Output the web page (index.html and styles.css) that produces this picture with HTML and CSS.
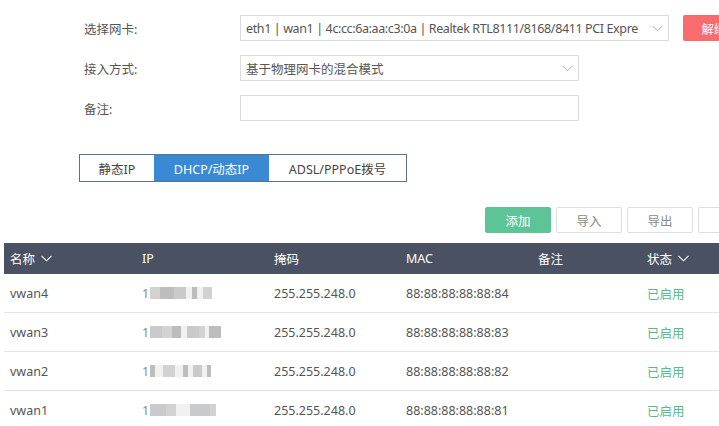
FILE: index.html
```html
<!DOCTYPE html>
<html lang="zh-CN">
<head>
<meta charset="utf-8">
<title>WAN</title>
<link rel="stylesheet" href="styles.css">
</head>
<body>
<div class="page">
  <div class="form">
    <div class="row">
      <div class="label">选择网卡:</div>
      <div class="select wide">
        <span class="val tight">eth1 | wan1 | 4c:cc:6a:aa:c3:0a | Realtek RTL8111/8168/8411 PCI Expre</span>
        <svg class="chev" width="11" height="7" viewBox="0 0 11 7"><path d="M0.5 0.8 L5.5 5.8 L10.5 0.8" fill="none" stroke="#a9adb3" stroke-width="1"/></svg>
      </div>
      <div class="btn-red">解绑</div>
    </div>
    <div class="row">
      <div class="label">接入方式:</div>
      <div class="select mid">
        <span class="val">基于物理网卡的混合模式</span>
        <svg class="chev" width="11" height="7" viewBox="0 0 11 7"><path d="M0.5 0.8 L5.5 5.8 L10.5 0.8" fill="none" stroke="#a9adb3" stroke-width="1"/></svg>
      </div>
    </div>
    <div class="row">
      <div class="label">备注:</div>
      <div class="select mid"></div>
    </div>
  </div>

  <div class="tabs">
    <div class="tab t1">静态IP</div>
    <div class="tab t2 active">DHCP/动态IP</div>
    <div class="tab t3">ADSL/PPPoE拨号</div>
  </div>

  <div class="toolbar">
    <div class="btn green">添加</div>
    <div class="btn">导入</div>
    <div class="btn">导出</div>
    <div class="btn">删除</div>
  </div>

  <div class="table">
    <div class="tr head">
      <div class="td">名称<svg class="hchev" width="11" height="7" viewBox="0 0 11 7"><path d="M0.5 0.8 L5.5 5.8 L10.5 0.8" fill="none" stroke="#fff" stroke-width="1.1"/></svg></div>
      <div class="td">IP</div>
      <div class="td">掩码</div>
      <div class="td">MAC</div>
      <div class="td">备注</div>
      <div class="td">状态<svg class="hchev" width="11" height="7" viewBox="0 0 11 7"><path d="M0.5 0.8 L5.5 5.8 L10.5 0.8" fill="none" stroke="#fff" stroke-width="1.1"/></svg></div>
    </div>
    <div class="tr">
      <div class="td">vwan4</div>
      <div class="td ip">1<span class="mz"><i class="a" style="width:10px"></i><i class="b" style="width:14px"></i><i class="c" style="width:12px"></i><i class="g" style="width:6px"></i><i class="b" style="width:5px"></i><i class="g" style="width:6px"></i><i class="a" style="width:9px"></i></span></div>
      <div class="td">255.255.248.0</div>
      <div class="td">88:88:88:88:88:84</div>
      <div class="td"></div>
      <div class="td ok">已启用</div>
    </div>
    <div class="tr">
      <div class="td">vwan3</div>
      <div class="td ip">1<span class="mz"><i class="c" style="width:12px"></i><i class="a" style="width:10px"></i><i class="b" style="width:9px"></i><i class="g" style="width:6px"></i><i class="c" style="width:12px"></i><i class="a" style="width:6px"></i><i class="g" style="width:4px"></i><i class="b" style="width:12px"></i></span></div>
      <div class="td">255.255.248.0</div>
      <div class="td">88:88:88:88:88:83</div>
      <div class="td"></div>
      <div class="td ok">已启用</div>
    </div>
    <div class="tr">
      <div class="td">vwan2</div>
      <div class="td ip">1<span class="mz"><i class="b" style="width:5px"></i><i class="g" style="width:8px"></i><i class="a" style="width:12px"></i><i class="g" style="width:8px"></i><i class="b" style="width:5px"></i><i class="g" style="width:5px"></i><i class="c" style="width:9px"></i><i class="g" style="width:5px"></i><i class="b" style="width:4px"></i></span></div>
      <div class="td">255.255.248.0</div>
      <div class="td">88:88:88:88:88:82</div>
      <div class="td"></div>
      <div class="td ok">已启用</div>
    </div>
    <div class="tr">
      <div class="td">vwan1</div>
      <div class="td ip">1<span class="mz"><i class="c" style="width:16px"></i><i class="a" style="width:10px"></i><i class="g" style="width:14px"></i><i class="c" style="width:20px"></i><i class="a" style="width:6px"></i></span></div>
      <div class="td">255.255.248.0</div>
      <div class="td">88:88:88:88:88:81</div>
      <div class="td"></div>
      <div class="td ok">已启用</div>
    </div>
  </div>
</div>
</body>
</html>
```

FILE: styles.css
```css
html, body {
  margin: 0;
  padding: 0;
  background: #fff;
}
body {
  width: 719px;
  height: 426px;
  overflow: hidden;
  font-family: "Noto Sans", "Noto Sans CJK SC", sans-serif;
  font-size: 12.5px;
  color: #555;
}
.page {
  width: 780px;
}
.form {
  padding: 15px 0 0 84px;
  display: flex;
  flex-direction: column;
  gap: 14px;
}
.row {
  display: flex;
  align-items: center;
  height: 26px;
}
.label {
  width: 156px;
  color: #555;
}
.select {
  box-sizing: border-box;
  height: 26px;
  border: 1px solid #dcdcdc;
  display: flex;
  align-items: center;
  justify-content: space-between;
  padding: 0 5px 0 5px;
  color: #555;
  white-space: nowrap;
  overflow: hidden;
}
.select.wide { width: 429px; }
.select.mid { width: 339px; }
.val { overflow: hidden; }
.val.tight { letter-spacing: -0.38px; }
.chev { flex: none; margin-left: 6px; }
.btn-red {
  margin-left: 14px;
  width: 62px;
  height: 26px;
  background: #f86c6e;
  color: #fff;
  border-radius: 2px;
  display: flex;
  align-items: center;
  justify-content: center;
}
.tabs {
  margin: 33px 0 0 79px;
  display: flex;
  height: 28px;
  box-sizing: border-box;
  border: 1px solid #5b7590;
  width: 328px;
}
.tab {
  display: flex;
  align-items: center;
  justify-content: center;
  color: #444;
}
.t1 { width: 74px; }
.t2 { width: 115px; }
.t3 { flex: 1; }
.tab.active {
  background: #3a89d5;
  color: #fff;
}
.toolbar {
  margin: 25px 0 0 485px;
  display: flex;
  gap: 5px;
}
.btn {
  box-sizing: border-box;
  width: 66px;
  height: 26px;
  border: 1px solid #dedede;
  display: flex;
  align-items: center;
  justify-content: center;
  color: #888;
  border-radius: 2px;
}
.btn.green {
  background: #5cc497;
  border-color: #5cc497;
  color: #fff;
}
.table {
  margin: 10px 0 0 4px;
}
.tr {
  display: grid;
  grid-template-columns: 132px 132px 132px 132px 109px 1fr;
  height: 38px;
  border-bottom: 1px solid #e4e4e4;
}
.tr.head {
  height: 31px;
  background: #4a5163;
  color: #fff;
  border-bottom: none;
}
.td {
  display: flex;
  align-items: center;
  padding-left: 6px;
  white-space: nowrap;
}
.hchev { margin-left: 6px; }
.ok { color: #5bb98b; }
.ip { color: #888; }
.mz {
  display: inline-flex;
  height: 12px;
  margin-left: 1px;
}
.mz i {
  display: block;
  height: 12px;
}
.mz i.a { background: #d2d2d2; }
.mz i.b { background: #bdbdbd; }
.mz i.c { background: #c9cacc; }
.mz i.g { background: #f1f1f1; }
```
